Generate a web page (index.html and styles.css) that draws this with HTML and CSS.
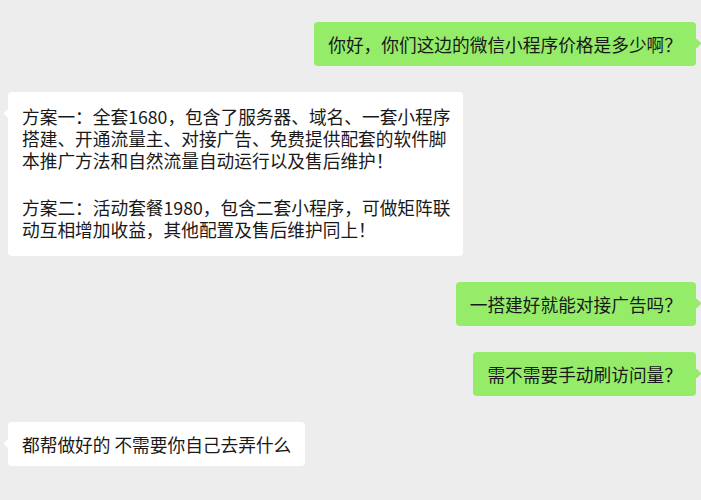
FILE: index.html
```html
<!DOCTYPE html>
<html lang="zh-CN">
<head>
  <meta charset="UTF-8">
  <meta name="viewport" content="width=device-width, initial-scale=1.0">
  <title>聊天记录</title>
  <link rel="stylesheet" href="styles.css">
</head>
<body>
  <div class="chat">
    <div class="msg me">
      <div class="bubble">你好，你们这边的微信小程序价格是多少啊？</div>
    </div>

    <div class="msg other">
      <div class="bubble long">
        <p>方案一：全套1680，包含了服务器、域名、一套小程序搭建、开通流量主、对接广告、免费提供配套的软件脚本推广方法和自然流量自动运行以及售后维护！</p>
        <p>方案二：活动套餐1980，包含二套小程序，可做矩阵联动互相增加收益，其他配置及售后维护同上！</p>
      </div>
    </div>

    <div class="msg me">
      <div class="bubble">一搭建好就能对接广告吗？</div>
    </div>

    <div class="msg me">
      <div class="bubble">需不需要手动刷访问量？</div>
    </div>

    <div class="msg other">
      <div class="bubble">都帮做好的 不需要你自己去弄什么</div>
    </div>
  </div>
</body>
</html>
```

FILE: styles.css
```css
body {
  margin: 0;
  background: #ededed;
  font-family: "Noto Sans CJK SC", "Microsoft YaHei", sans-serif;
  color: #191919;
}
.chat {
  display: flex;
  flex-direction: column;
  gap: 26px;
  padding: 22px 5px 0 8px;
}
.msg {
  display: flex;
}
.msg.me {
  justify-content: flex-end;
}
.msg.other {
  justify-content: flex-start;
}
.bubble {
  position: relative;
  max-width: 455px;
  box-sizing: border-box;
  padding: 11px 14px;
  border-radius: 4px;
  font-size: 17.7px;
  line-height: 22px;
  background: #fff;
}
.bubble::before {
  content: "";
  position: absolute;
  top: 17.5px;
  width: 7px;
  height: 7px;
  border-radius: 1px;
  background: inherit;
  transform: rotate(45deg);
}
.me .bubble {
  background: #95ec69;
}
.me .bubble::before {
  right: -3.5px;
}
.other .bubble::before {
  left: -3.5px;
}
/* digits are a bit wider than in the original font, leave room on the right */
.bubble.long {
  padding: 13px 11px 16px 14px;
}
.bubble p {
  margin: 0;
}
.bubble p + p {
  margin-top: 25px;
}
```
